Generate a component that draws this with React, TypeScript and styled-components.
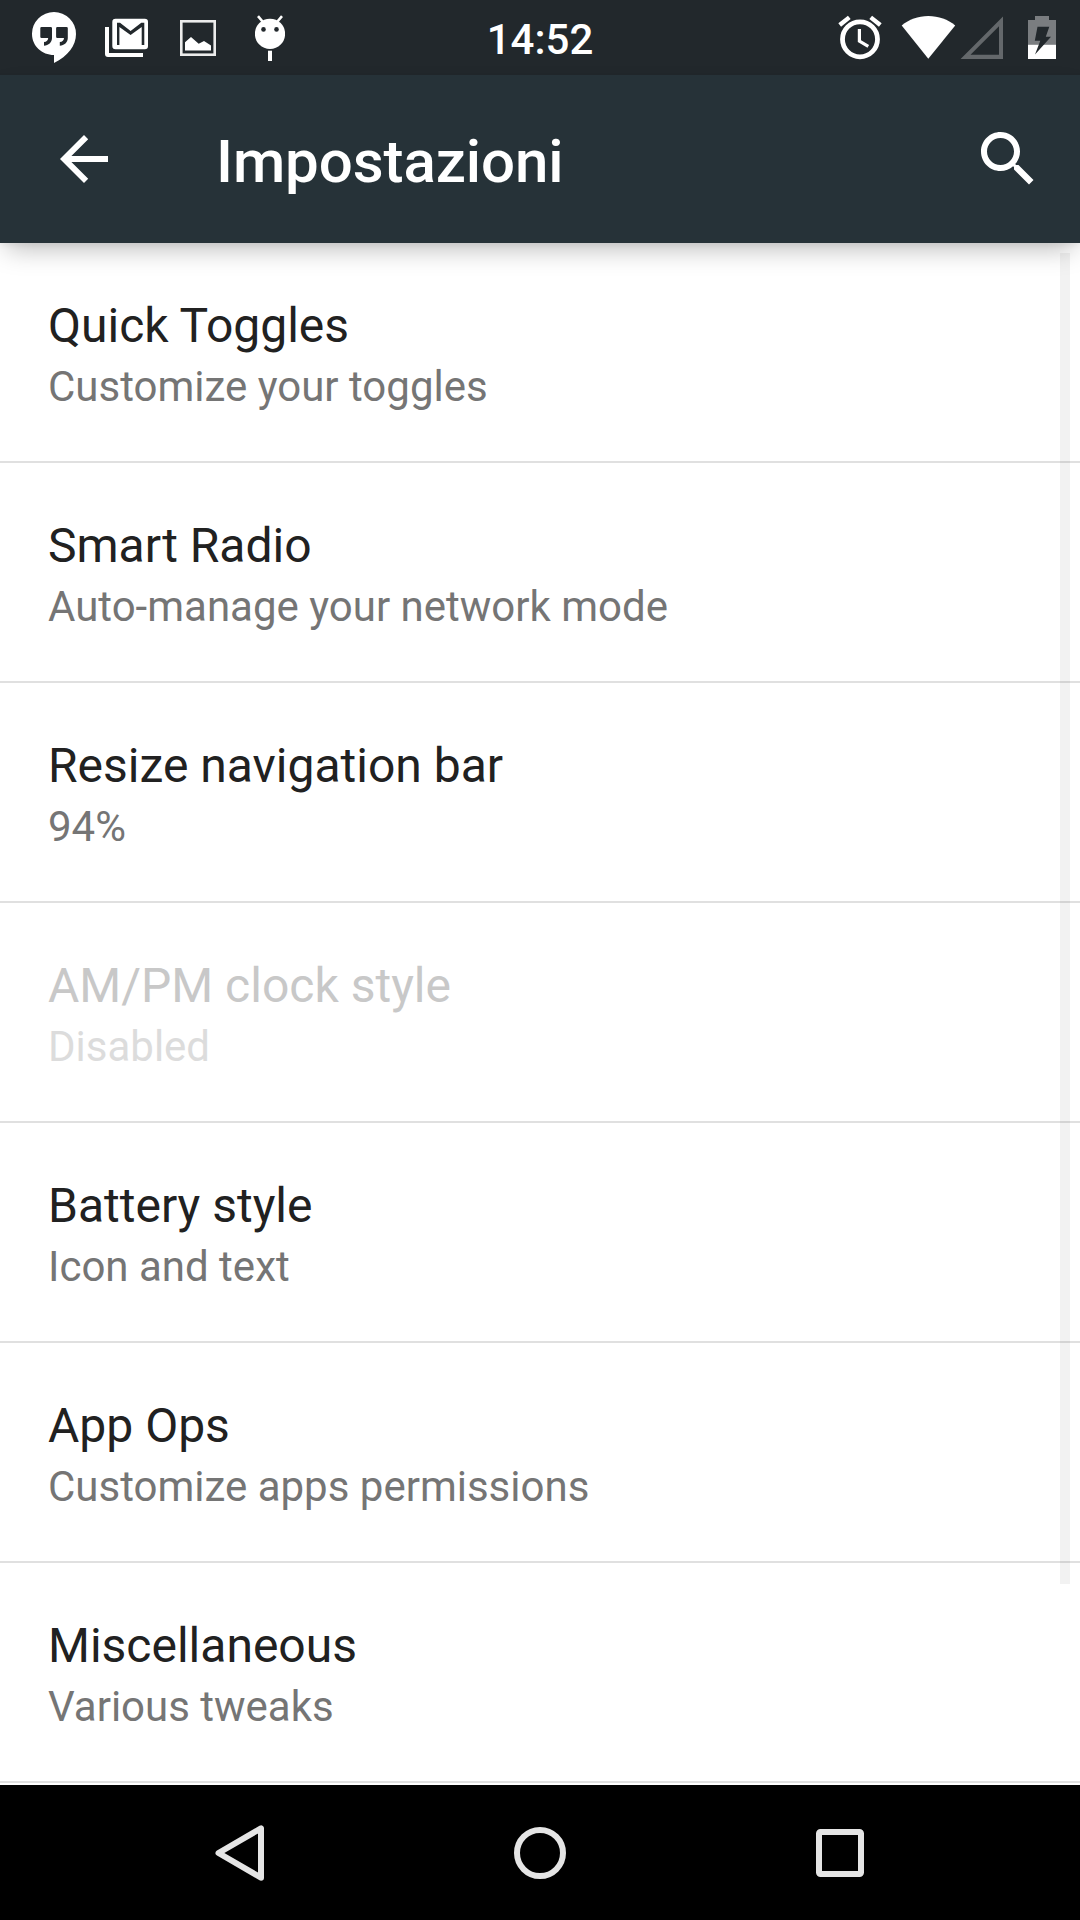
import React from "react";
import styled, { createGlobalStyle } from "styled-components";

const GlobalStyle = createGlobalStyle`
  html, body { margin: 0; padding: 0; background: #fff; }
  * { box-sizing: border-box; }
`;

const Screen = styled.div`
  width: 1080px;
  height: 1920px;
  display: flex;
  flex-direction: column;
  overflow: hidden;
  background: #fff;
  font-family: Roboto, "Noto Sans", sans-serif;
`;

const StatusBar = styled.header`
  display: grid;
  grid-template-columns: 1fr auto 1fr;
  align-items: start;
  flex: none;
  height: 75px;
  padding: 0 24px;
  background: #22282c;
`;

const IconGroup = styled.div<{ $end?: boolean }>`
  display: flex;
  height: 75px;
  justify-content: ${(p) => (p.$end ? "flex-end" : "flex-start")};
`;

const StatusIcon = styled.svg<{ $gap?: number }>`
  display: block;
  flex: none;
  margin-left: ${(p) => p.$gap ?? 0}px;
`;

const Clock = styled.time`
  font-size: 42px;
  font-weight: 500;
  line-height: 79px;
  color: #fff;
`;

const Toolbar = styled.div`
  position: relative;
  z-index: 1;
  display: flex;
  align-items: center;
  flex: none;
  height: 168px;
  padding: 0 36px 0 48px;
  background: #263238;
  box-shadow: 0 2px 6px rgba(0, 0, 0, 0.05), 0 12px 24px -6px rgba(0, 0, 0, 0.26);
`;

const ToolbarButton = styled.button`
  flex: none;
  width: 72px;
  height: 72px;
  padding: 0;
  border: 0;
  background: none;
  color: #fff;
  svg { display: block; }
`;

const Heading = styled.h1`
  flex: 1;
  margin: 0 0 0 96px;
  padding-top: 5px;
  font-size: 60px;
  font-weight: 500;
  line-height: 72px;
  letter-spacing: -0.08px;
  color: #fff;
`;

const List = styled.main`
  position: relative;
  flex: 1;
  min-height: 0;
`;

const Row = styled.section`
  height: 220px;
  padding: 53px 48px 0;
  border-bottom: 2px solid #e0e0e0;
`;

const RowTitle = styled.div<{ $off?: boolean }>`
  font-size: 48px;
  line-height: 60px;
  color: ${(p) => (p.$off ? "#c8c8c8" : "#212121")};
`;

const RowSummary = styled.div<{ $off?: boolean }>`
  margin-top: 6px;
  font-size: 42px;
  line-height: 50px;
  color: ${(p) => (p.$off ? "#dcdcdc" : "#757575")};
`;

const ScrollThumb = styled.div`
  position: absolute;
  top: 10px;
  right: 10px;
  width: 10px;
  height: 1331px;
  background: rgba(0, 0, 0, 0.05);
`;

const NavBar = styled.nav`
  display: flex;
  align-items: center;
  justify-content: center;
  gap: 240px;
  flex: none;
  height: 135px;
  background: #000;
`;

const NavIcon = styled.svg`
  display: block;
  flex: none;
  fill: none;
  stroke: #e5e5e5;
  stroke-width: 6;
  stroke-linejoin: round;
`;

const rows = [
  { title: "Quick Toggles", summary: "Customize your toggles" },
  { title: "Smart Radio", summary: "Auto-manage your network mode" },
  { title: "Resize navigation bar", summary: "94%" },
  { title: "AM/PM clock style", summary: "Disabled", off: true },
  { title: "Battery style", summary: "Icon and text" },
  { title: "App Ops", summary: "Customize apps permissions" },
  { title: "Miscellaneous", summary: "Various tweaks" },
];

export default function App() {
  return (
    <Screen>
      <GlobalStyle />
      <StatusBar>
        <IconGroup>
          <StatusIcon $gap={8} width="44" height="75" viewBox="32 0 44 75">
            <path fill="#fff" d="M54 12A22 21.7 0 0 0 32 34C32 46 42 55 54 55V63C68 56 76 45.500 76 34A22 22 0 0 0 54 12Z" />
            <g fill="#22282c">
              <path d="M41.500 27H50.700Q52 27 52 28.300V38C52 42.500 48.500 45.500 44 45.700V42C46.500 42 48.200 40.300 48.200 38H41.500Q40.300 38 40.300 36.700V28.300Q40.300 27 41.500 27Z" />
              <path transform="translate(15.800 0)" d="M41.500 27H50.700Q52 27 52 28.300V38C52 42.500 48.500 45.500 44 45.700V42C46.500 42 48.200 40.300 48.200 38H41.500Q40.300 38 40.300 36.700V28.300Q40.300 27 41.500 27Z" />
            </g>
          </StatusIcon>
          <StatusIcon $gap={29} width="43" height="75" viewBox="105 0 43 75">
            <path fill="#fff" d="M105 27H109V53H143V57H108Q105 57 105 54Z" />
            <rect fill="#fff" x="112.300" y="18.700" width="35.700" height="30.600" rx="3.200" />
            <path fill="#22282c" d="M117 22.700H120L130.600 31L141.300 22.700H144.300V45H141.700V27L130.600 35L119.400 27V45H117Z" />
          </StatusIcon>
          <StatusIcon $gap={32} width="36" height="75" viewBox="180 0 36 75">
            <rect x="181.300" y="21.300" width="33.400" height="33.400" fill="none" stroke="#ececec" strokeWidth="2.600" />
            <path fill="#fff" d="M185 42.300L191 37L198.700 43.700L204 41L211 45.500V50.500H185Z" />
          </StatusIcon>
          <StatusIcon $gap={39} width="30" height="75" viewBox="255 0 30 75">
            <circle cx="270" cy="33.800" r="15.100" fill="#fff" />
            <path d="M258 16.200L263 22M282 16.200L277 22" stroke="#fff" strokeWidth="2.600" />
            <circle cx="263.500" cy="29.400" r="2.300" fill="#22282c" />
            <circle cx="276.500" cy="29.400" r="2.300" fill="#22282c" />
            <rect x="268" y="50.700" width="4" height="10.300" fill="#fff" />
          </StatusIcon>
        </IconGroup>
        <Clock>14:52</Clock>
        <IconGroup $end>
          <StatusIcon width="44" height="75" viewBox="838 0 44 75">
            <g fill="none" stroke="#fff">
              <circle cx="860" cy="39.300" r="17.500" strokeWidth="4.800" />
              <path d="M859.400 29V41L868.300 46.300" strokeWidth="3.200" />
              <path d="M839.700 25L849.300 17.400M880.300 25L870.700 17.400" strokeWidth="4.400" />
            </g>
          </StatusIcon>
          <StatusIcon $gap={19} width="55" height="75" viewBox="901 0 55 75">
            <path fill="#fff" d="M901.700 25.500C909 19.500 918 16 928.300 16S948 19.500 955.200 25.500L928.300 58.800Z" />
          </StatusIcon>
          <StatusIcon $gap={4} width="43" height="75" viewBox="960 0 43 75">
            <path fill="#64686b" fillRule="evenodd" d="M960.600 59L1003 16.600V59ZM970.500 54.800H999V26.300Z" />
          </StatusIcon>
          <StatusIcon $gap={25} width="28" height="75" viewBox="1028 0 28 75">
            <path fill="#7a7d80" d="M1035 16H1049V20H1056V45H1028V20H1035Z" />
            <rect x="1028" y="44.800" width="28" height="14.200" fill="#fff" />
            <path fill="#22282c" d="M1037.500 26.700H1049.300L1045.800 36.700H1051L1035 54.500L1040.300 40.800H1034.800Z" />
          </StatusIcon>
        </IconGroup>
      </StatusBar>
      <Toolbar>
        <ToolbarButton aria-label="Indietro">
          <svg width="72" height="72" viewBox="0 0 24 24" fill="currentColor">
            <path d="M20 11H7.800l5.600-5.600L12 4l-8 8 8 8 1.400-1.400L7.800 13H20v-2z" />
          </svg>
        </ToolbarButton>
        <Heading>Impostazioni</Heading>
        <ToolbarButton aria-label="Cerca">
          <svg width="72" height="72" viewBox="0 0 24 24" fill="currentColor">
            <path d="M15.500 14h-.8l-.3-.3c1-1.100 1.600-2.600 1.600-4.200C16 5.900 13.100 3 9.500 3S3 5.900 3 9.500 5.900 16 9.500 16c1.600 0 3.100-.6 4.200-1.600l.3.3v.8l5 5 1.500-1.500-5-5zm-6 0C7 14 5 12 5 9.500S7 5 9.500 5 14 7 14 9.500 12 14 9.500 14z" />
          </svg>
        </ToolbarButton>
      </Toolbar>
      <List>
        {rows.map((r) => (
          <Row key={r.title}>
            <RowTitle $off={r.off}>{r.title}</RowTitle>
            <RowSummary $off={r.off}>{r.summary}</RowSummary>
          </Row>
        ))}
        <ScrollThumb />
      </List>
      <NavBar>
        <NavIcon width="60" height="60" viewBox="210 1823 60 60">
          <path d="M218.500 1853L261 1828.300V1877.700Z" />
        </NavIcon>
        <NavIcon width="60" height="60" viewBox="510 1823 60 60">
          <circle cx="540" cy="1853" r="23" />
        </NavIcon>
        <NavIcon width="60" height="60" viewBox="810 1823 60 60">
          <rect x="819" y="1832" width="42" height="42" rx="1.500" />
        </NavIcon>
      </NavBar>
    </Screen>
  );
}
